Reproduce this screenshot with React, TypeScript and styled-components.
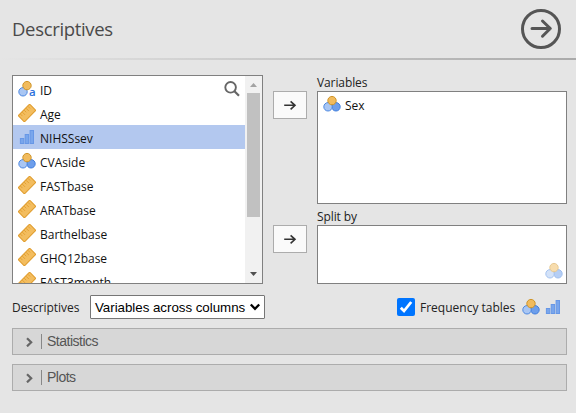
import React, { useState } from 'react';
import styled, { createGlobalStyle } from 'styled-components';

const Global = createGlobalStyle`
  * { box-sizing: border-box; }
  body { margin: 0; background: #e5e5e5; }
`;

const Page = styled.main`
  width: 576px;
  height: 413px;
  overflow: hidden;
  background: #e5e5e5;
  color: #222;
  font-family: 'Open Sans', 'Noto Sans', sans-serif;
  font-size: 12px;
`;

const Header = styled.header`
  display: flex;
  align-items: center;
  justify-content: space-between;
  height: 58px;
  padding: 0 15px 0 12px;
`;

const Title = styled.h1`
  margin: 0;
  font-size: 18.5px;
  font-weight: 400;
  letter-spacing: -0.33px;
  line-height: 24px;
  color: #4a4a4a;
`;

const RoundButton = styled.button`
  width: 40px;
  height: 40px;
  padding: 0;
  border: 0;
  background: none;
`;

const Rule = styled.div`
  height: 2px;
  background: linear-gradient(to right, #e5e5e5, #aaa);
`;

const Assign = styled.section`
  display: grid;
  grid-template-columns: 251px 34px 250px;
  column-gap: 10px;
  height: 209px;
  margin: 15px 0 0 12px;
`;

const Box = styled.div<{ $height: number }>`
  display: flex;
  height: ${(p) => p.$height}px;
  border: 1px solid #808080;
  background: #fff;
  overflow: hidden;
`;

const Rows = styled.div<{ $inset?: number }>`
  flex: 1;
  padding-top: ${(p) => p.$inset ?? 0}px;
`;

const Row = styled.div<{ $selected?: boolean }>`
  display: flex;
  align-items: center;
  gap: 4px;
  height: 24px;
  padding: 0 5px;
  background: ${(p) => (p.$selected ? '#b3c8ef' : 'transparent')};
  color: #111;
  svg { flex: none; }
`;

const Name = styled.span`
  flex: 1;
  padding-top: 3px;
  white-space: nowrap;
`;

const ScrollBar = styled.div`
  display: flex;
  flex-direction: column;
  align-items: center;
  width: 17px;
  background: #f1f1f1;
`;

const Thumb = styled.div`
  width: 13px;
  height: 124px;
  background: #c1c1c1;
`;

const Spacer = styled.div`
  flex: 1;
`;

const Arrows = styled.div`
  display: flex;
  flex-direction: column;
  gap: 106px;
  padding-top: 16px;
`;

const ArrowButton = styled.button`
  display: flex;
  align-items: center;
  justify-content: center;
  width: 34px;
  height: 28px;
  padding: 0;
  border: 1px solid #acacac;
  background: #fafafa;
`;

const Targets = styled.div`
  display: flex;
  flex-direction: column;
`;

const TargetLabel = styled.div<{ $height: number }>`
  display: flex;
  align-items: flex-end;
  height: ${(p) => p.$height}px;
  letter-spacing: -0.1px;
  line-height: 17px;
`;

const Hint = styled.div`
  display: flex;
  align-items: flex-end;
  justify-content: flex-end;
  width: 100%;
  padding: 0 3px 3px 0;
  opacity: 0.5;
`;

const Options = styled.div`
  display: flex;
  align-items: center;
  height: 24px;
  margin: 11px 14px 9px 12px;
`;

const OptionLabel = styled.span`
  width: 78px;
  letter-spacing: -0.05px;
`;

const Select = styled.button`
  display: flex;
  align-items: center;
  justify-content: space-between;
  width: 175px;
  height: 24px;
  padding: 0 3px 0 4px;
  border: 1px solid #767676;
  border-radius: 1px;
  background: #fff;
  color: #000;
  font: 13.333px 'Liberation Sans', Arial, sans-serif;
  letter-spacing: -0.03px;
  white-space: nowrap;
`;

const Check = styled.span`
  display: flex;
  width: 18px;
  height: 18px;
  margin: 0 5px 0 132px;
  border-radius: 2px;
  background: #0075ff;
`;

const Kinds = styled.span`
  display: flex;
  gap: 4px;
  margin-left: auto;
`;

const Panels = styled.div`
  display: flex;
  flex-direction: column;
  gap: 9px;
  margin: 0 9px 0 12px;
`;

const Panel = styled.div`
  display: flex;
  align-items: center;
  height: 27px;
  padding-left: 12px;
  border: 1px solid #acacac;
  background: #d7d7d7;
  color: #555;
  font: 14px 'Liberation Sans', Arial, sans-serif;
  letter-spacing: -0.5px;
`;

const PanelTitle = styled.span`
  margin-left: 7px;
  padding-left: 5px;
  border-left: 1px solid #888;
  line-height: 15px;
`;

type Kind = 'id' | 'continuous' | 'ordinal' | 'nominal';

const KindIcon = ({ kind }: { kind: Kind }) => (
  <svg width="18" height="18" viewBox="0 0 18 18">
    {kind === 'continuous' && (
      <g transform="rotate(-45 9 9)" stroke="#e09c2c">
        <rect x="0.9" y="4.6" width="16.2" height="8.8" rx="0.8" fill="#f3bd5f" />
        <path d="M3.6 5v3M6.3 5v4M9 5v3M11.7 5v4M14.4 5v3" fill="none" strokeWidth="0.8" />
      </g>
    )}
    {kind === 'ordinal' && (
      <g fill="#79a6ec" stroke="#6797e6">
        <rect x="2.4" y="10.5" width="3.4" height="5" />
        <rect x="7.2" y="6.5" width="3.4" height="9" />
        <rect x="12.1" y="2.5" width="3.4" height="13" />
      </g>
    )}
    {(kind === 'nominal' || kind === 'id') && (
      <>
        {kind === 'nominal' && <circle cx="13" cy="11.8" r="4.2" fill="#6d9eeb" stroke="#3f7ede" />}
        <circle cx="5" cy="11.8" r="4.2" fill="#a9c6f3" stroke="#4c88e2" />
        <circle cx="9" cy="5.6" r="4.2" fill="#f1bb5d" stroke="#d09528" />
      </>
    )}
    {kind === 'id' && (
      <text x="11" y="16" fontFamily="Open Sans" fontSize="11.5" fontWeight="600" fill="#2b70dc">a</text>
    )}
  </svg>
);

const SearchIcon = () => (
  <svg width="16" height="16" viewBox="0 0 16 16" fill="none" stroke="#666" strokeWidth="1.9">
    <circle cx="6.6" cy="6.3" r="5.3" />
    <path d="M10.5 10.2L15 14.7" strokeWidth="2.2" />
  </svg>
);

const ArrowIcon = () => (
  <svg width="14" height="12" viewBox="0 0 14 12" fill="none" stroke="#333" strokeWidth="1.6">
    <path d="M1.2 6.3H12M7.6 2.3L12 6.3L7.6 10.3" />
  </svg>
);

const Chevron = () => (
  <svg width="9" height="10" viewBox="0 0 9 10" fill="none" stroke="#666" strokeWidth="2.2">
    <path d="M2 1.2L6.2 5.3L2 9.4" />
  </svg>
);

const variables: { name: string; kind: Kind }[] = [
  { name: 'ID', kind: 'id' },
  { name: 'Age', kind: 'continuous' },
  { name: 'NIHSSsev', kind: 'ordinal' },
  { name: 'CVAside', kind: 'nominal' },
  { name: 'FASTbase', kind: 'continuous' },
  { name: 'ARATbase', kind: 'continuous' },
  { name: 'Barthelbase', kind: 'continuous' },
  { name: 'GHQ12base', kind: 'continuous' },
  { name: 'FAST3month', kind: 'continuous' },
];

export default function App() {
  const [selected, setSelected] = useState('NIHSSsev');
  return (
    <Page>
      <Global />
      <Header>
        <Title>Descriptives</Title>
        <RoundButton aria-label="Close options">
          <svg width="40" height="40" viewBox="0 0 40 40" fill="none" stroke="#555" strokeWidth="3" strokeLinecap="round" strokeLinejoin="round">
            <circle cx="20" cy="20" r="18.5" />
            <path d="M11 19.5H29M21.5 12L29.3 19.5L21.5 27.2" />
          </svg>
        </RoundButton>
      </Header>
      <Rule />
      <Assign>
        <Box $height={209}>
          <Rows $inset={1}>
            {variables.map((v) => (
              <Row key={v.name} $selected={v.name === selected} onClick={() => setSelected(v.name)}>
                <KindIcon kind={v.kind} />
                <Name>{v.name}</Name>
                {v.kind === 'id' && <SearchIcon />}
              </Row>
            ))}
          </Rows>
          <ScrollBar>
            <svg width="17" height="17"><path d="M5 11L8.5 7L12 11Z" fill="#a3a3a3" /></svg>
            <Thumb />
            <Spacer />
            <svg width="17" height="17"><path d="M5 6L8.5 10L12 6Z" fill="#505050" /></svg>
          </ScrollBar>
        </Box>
        <Arrows>
          <ArrowButton aria-label="Assign variable"><ArrowIcon /></ArrowButton>
          <ArrowButton aria-label="Assign split"><ArrowIcon /></ArrowButton>
        </Arrows>
        <Targets>
          <TargetLabel $height={16}>Variables</TargetLabel>
          <Box $height={113}>
            <Rows>
              <Row><KindIcon kind="nominal" /><Name>Sex</Name></Row>
            </Rows>
          </Box>
          <TargetLabel $height={21}>Split by</TargetLabel>
          <Box $height={59}>
            <Hint><KindIcon kind="nominal" /></Hint>
          </Box>
        </Targets>
      </Assign>
      <Options>
        <OptionLabel>Descriptives</OptionLabel>
        <Select>
          Variables across columns
          <svg width="12" height="8" viewBox="0 0 12 8" fill="none" stroke="#000" strokeWidth="2.3"><path d="M1.8 1.5L6 5.8L10.2 1.5" /></svg>
        </Select>
        <Check role="checkbox" aria-checked="true">
          <svg width="18" height="18" fill="none" stroke="#fff" strokeWidth="2.8"><path d="M3.8 9.8L7 13L14.2 4" /></svg>
        </Check>
        <span>Frequency tables</span>
        <Kinds>
          <KindIcon kind="nominal" />
          <KindIcon kind="ordinal" />
        </Kinds>
      </Options>
      <Panels>
        {['Statistics', 'Plots'].map((t) => (
          <Panel key={t}><Chevron /><PanelTitle>{t}</PanelTitle></Panel>
        ))}
      </Panels>
    </Page>
  );
}
